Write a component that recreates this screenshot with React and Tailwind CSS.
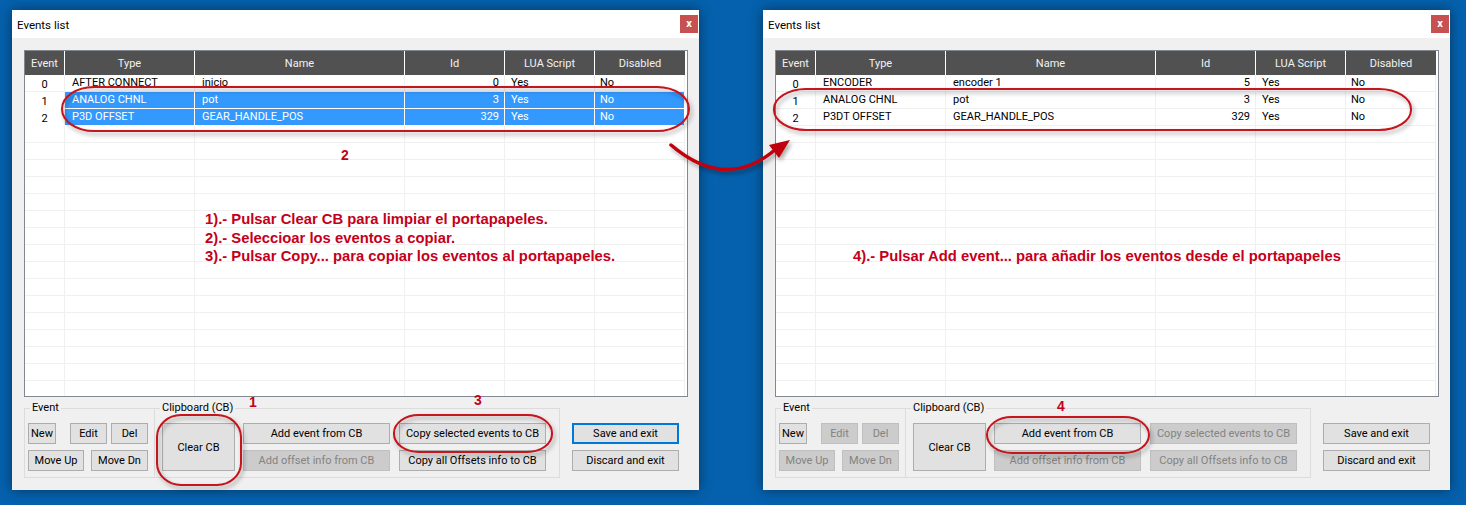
import clsx from 'clsx'

const COLS = ['w-[40px]', 'w-[130px]', 'w-[210px]', 'w-[100px]', 'w-[90px]', 'w-[90px]']
const HEAD = ['Event', 'Type', 'Name', 'Id', 'LUA Script', 'Disabled']

const leftRows = [
  ['0', 'AFTER CONNECT', 'inicio', '0', 'Yes', 'No'],
  ['1', 'ANALOG CHNL', 'pot', '3', 'Yes', 'No'],
  ['2', 'P3D OFFSET', 'GEAR_HANDLE_POS', '329', 'Yes', 'No'],
]
const rightRows = [
  ['0', 'ENCODER', 'encoder 1', '5', 'Yes', 'No'],
  ['1', 'ANALOG CHNL', 'pot', '3', 'Yes', 'No'],
  ['2', 'P3DT OFFSET', 'GEAR_HANDLE_POS', '329', 'Yes', 'No'],
]

function Btn({ children, disabled, primary, className }) {
  return (
    <div
      className={clsx(
        'flex items-center justify-center text-[11px] leading-none',
        primary ? 'border-2 border-[#0078d7] bg-[#e1e1e1] text-black' : 'border',
        !primary && (disabled ? 'bg-[#cccccc] border-[#bfbfbf] text-[#838383]' : 'bg-[#e1e1e1] border-[#adadad] text-black'),
        className
      )}
    >
      {children}
    </div>
  )
}

function Cell({ i, sel, children }) {
  const align =
    i === 0 ? 'justify-center pt-[4px]' : i === 3 ? 'justify-end pr-[5px] pt-[1px]' : i === 1 || i === 2 ? 'pl-[7px] pt-[1px]' : i === 4 ? 'pl-[6px] pt-[1px]' : 'pl-[5px] pt-[1px]'
  const selected = sel && i > 0
  return (
    <div
      className={clsx(
        COLS[i],
        'flex items-center h-full border-r whitespace-nowrap overflow-hidden',
        align,
        selected ? 'bg-[#3399ff] text-white border-white' : 'border-[#f0f0f0] text-black'
      )}
    >
      {children}
    </div>
  )
}

function Table({ rows, selected }) {
  const blanks = Array.from({ length: 19 - rows.length }, () => ['', '', '', '', '', ''])
  return (
    <div className="w-[664px] h-[347px] border border-[#828790] bg-white overflow-hidden">
      <div className="flex h-[24px] w-[660px] bg-[#515151] text-[#f2f2f2]">
        {HEAD.map((h, i) => (
          <div key={h} className={clsx(COLS[i], 'flex items-center justify-center pt-[2px]', i < 5 && 'border-r border-white')}>
            {h}
          </div>
        ))}
      </div>
      {[...rows, ...blanks].map((r, ri) => {
        const sel = selected.includes(ri)
        return (
          <div key={ri} className={clsx('flex h-[17px] w-[660px] border-b', sel ? 'border-white' : 'border-[#f0f0f0]')}>
            {r.map((c, i) => (
              <Cell key={i} i={i} sel={sel}>
                {c}
              </Cell>
            ))}
          </div>
        )
      })}
    </div>
  )
}

function Group({ label, className, children }) {
  return (
    <div className={clsx('relative h-[70px] border border-[#dcdcdc] pt-[14px]', className)}>
      <span className="absolute -top-[8px] left-[5px] px-[2px] bg-[#f0f0f0] leading-[14px] text-black">{label}</span>
      {children}
    </div>
  )
}

function EventsWindow({ rows, selected, right }) {
  return (
    <div className="w-[687px] h-[480px] flex flex-col shadow-[0_0_12px_rgba(0,0,0,0.45)]">
      <div className="h-[28px] bg-white flex items-start justify-between">
        <span className="pl-[5px] pt-[7px] text-[11.5px] text-black">Events list</span>
        <div className="mt-[5px] mr-[1px] w-[18px] h-[18px] bg-[#c75050] flex items-center justify-center text-white text-[11px] font-bold leading-none pb-[2px]">
          x
        </div>
      </div>
      <div className="flex-1 bg-[#f0f0f0] pt-[12px] pl-[12px]">
        <Table rows={rows} selected={selected} />
        <div className="flex mt-[11px]">
          <Group label="Event" className="w-[131px] pl-[3px]">
            <div className="flex">
              <Btn className="w-[28px] h-[21px]">New</Btn>
              <Btn disabled={right} className="w-[37px] h-[21px] ml-[14px]">Edit</Btn>
              <Btn disabled={right} className="w-[37px] h-[21px] ml-[4px]">Del</Btn>
            </div>
            <div className="flex mt-[6px]">
              <Btn disabled={right} className="w-[56px] h-[21px]">Move Up</Btn>
              <Btn disabled={right} className="w-[57px] h-[21px] ml-[7px]">Move Dn</Btn>
            </div>
          </Group>
          <Group label="Clipboard (CB)" className="w-[405px] pl-[7px] border-l-0 flex">
            <Btn className="w-[73px] h-[48px]">Clear CB</Btn>
            <div className="flex flex-col gap-[6px] ml-[8px]">
              <Btn className="w-[147px] h-[21px]">Add event from CB</Btn>
              <Btn disabled className="w-[147px] h-[21px]">Add offset info from CB</Btn>
            </div>
            <div className="flex flex-col gap-[6px] ml-[9px]">
              <Btn disabled={right} className="w-[147px] h-[21px]">Copy selected events to CB</Btn>
              <Btn disabled={right} className="w-[147px] h-[21px]">Copy all Offsets info to CB</Btn>
            </div>
          </Group>
          <div className="flex flex-col gap-[6px] ml-[12px] mt-[15px]">
            <Btn primary={!right} className="w-[107px] h-[21px]">Save and exit</Btn>
            <Btn className="w-[107px] h-[21px]">Discard and exit</Btn>
          </div>
        </div>
      </div>
    </div>
  )
}

export default function App() {
  const red = '#c4121a'
  return (
    <div className="relative w-[1466px] h-[505px] overflow-hidden bg-[#0561ad] font-['Roboto','Liberation_Sans',sans-serif] text-[11px]">
      <div className="flex gap-[64px] pt-[10px] pl-[12px]">
        <EventsWindow rows={leftRows} selected={[1, 2]} />
        <EventsWindow rows={rightRows} selected={[]} right />
      </div>

      {/* annotations */}
      <svg className="absolute left-0 top-0 pointer-events-none" width="1466" height="505" viewBox="0 0 1466 505">
        <defs>
          <filter id="sh" x="-10%" y="-30%" width="120%" height="160%">
            <feDropShadow dx="2" dy="3" stdDeviation="2" floodColor="#000" floodOpacity="0.35" />
          </filter>
        </defs>
        <g fill="none" stroke={red} strokeWidth="2" filter="url(#sh)">
          <rect x="62" y="87" width="627" height="44" rx="32" ry="22" />
          <rect x="157" y="415" width="84" height="70" rx="24" ry="22" />
          <rect x="394" y="415" width="158" height="37" rx="25" ry="18" />
          <rect x="774" y="89" width="637" height="41" rx="32" ry="20" />
          <rect x="987" y="417" width="162" height="36" rx="25" ry="18" />
        </g>
        <g filter="url(#sh)">
          <path d="M 671 145 Q 726 192 776 149" fill="none" stroke="#c00010" strokeWidth="3.5" strokeLinecap="round" />
          <polygon points="769,145 790,140 779,158" fill="#c00010" />
        </g>
      </svg>

      <div className="absolute left-[249px] top-[394px] font-['Liberation_Sans',Arial,sans-serif] text-[14px] font-bold leading-[16px] text-[#c4001a]">1</div>
      <div className="absolute left-[341px] top-[147px] font-['Liberation_Sans',Arial,sans-serif] text-[14px] font-bold leading-[16px] text-[#c4001a]">2</div>
      <div className="absolute left-[474px] top-[392px] font-['Liberation_Sans',Arial,sans-serif] text-[14px] font-bold leading-[16px] text-[#c4001a]">3</div>
      <div className="absolute left-[1057px] top-[398px] font-['Liberation_Sans',Arial,sans-serif] text-[14px] font-bold leading-[16px] text-[#c4001a]">4</div>

      <div className="absolute left-[205px] top-[210px] font-['Liberation_Sans',Arial,sans-serif] text-[14.8px] font-bold leading-[18.5px] text-[#c4001a] whitespace-nowrap">
        <div>1).- Pulsar Clear CB para limpiar el portapapeles.</div>
        <div>2).- Seleccioar los eventos a copiar.</div>
        <div>3).- Pulsar Copy... para copiar los eventos al portapapeles.</div>
      </div>
      <div className="absolute left-[853px] top-[247px] font-['Liberation_Sans',Arial,sans-serif] text-[14.8px] font-bold leading-[18px] text-[#c4001a] whitespace-nowrap">
        4).- Pulsar Add event... para añadir los eventos desde el portapapeles
      </div>
    </div>
  )
}
